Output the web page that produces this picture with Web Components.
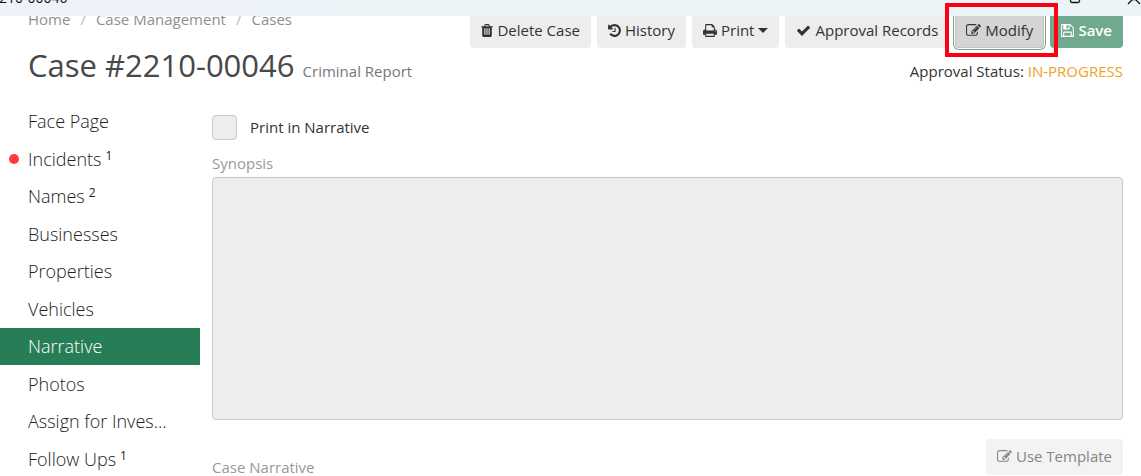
<!DOCTYPE html>
<html lang="en">
<head>
<meta charset="utf-8">
<meta name="viewport" content="width=device-width, initial-scale=1">
<title>Case #2210-00046</title>
<style>
  :root {
    --text: #333;
    --muted: #999;
    --green: #267d56;
    --green-soft: #71a98e;
    --control: #ededed;
    --border: #c8c8c8;
    --warn: #f0a31c;
    --gutter: 28px;
    --edge: 18px;
  }
  body {
    margin: 0;
    background: #fff;
    color: var(--text);
    font: 15px/1.5 "Open Sans", "Noto Sans", sans-serif;
  }
</style>
</head>
<body>
<case-app></case-app>

<script>
// Icon outlines: [x offset, width, path], all on a 1792 unit em.
const ICONS = {
  trash: [192, 1408, "M704 1376v-704q0-14-9-23t-23-9h-64q-14 0-23 9t-9 23v704q0 14 9 23t23 9h64q14 0 23-9t9-23zm256 0v-704q0-14-9-23t-23-9h-64q-14 0-23 9t-9 23v704q0 14 9 23t23 9h64q14 0 23-9t9-23zm256 0v-704q0-14-9-23t-23-9h-64q-14 0-23 9t-9 23v704q0 14 9 23t23 9h64q14 0 23-9t9-23zm-544-992h448l-48-117q-7-9-17-11h-317q-10 2-17 11zm928 32v64q0 14-9 23t-23 9h-96v948q0 83-47 143.5t-113 60.5h-832q-66 0-113-58.5t-47-141.5v-952h-96q-14 0-23-9t-9-23v-64q0-14 9-23t23-9h309l70-167q15-37 54-63t79-26h320q40 0 79 26t54 63l70 167h309q14 0 23 9t9 23z"],
  history: [128, 1536, "M1664 896q0 156-61 298t-164 245-245 164-298 61q-172 0-327-72.5t-264-204.5q-7-10-6.5-22.5t8.5-20.5l137-138q10-9 25-9 16 2 23 12 73 95 179 147t225 52q104 0 198.5-40.5t163.5-109.5 109.5-163.5 40.5-198.5-40.5-198.5-109.5-163.5-163.5-109.5-198.5-40.5q-98 0-188 35.5t-160 101.5l137 138q31 30 14 69-17 40-59 40h-448q-26 0-45-19t-19-45v-448q0-42 40-59 39-17 69 14l130 129q107-101 244.5-156.5t284.5-55.5q156 0 298 61t245 164 164 245 61 298zm-640-288v448q0 14-9 23t-23 9h-320q-14 0-23-9t-9-23v-64q0-14 9-23t23-9h224v-352q0-14 9-23t23-9h64q14 0 23 9t9 23z"],
  print: [64, 1664, "M448 1536h896v-256h-896v256zm0-640h896v-384h-160q-40 0-68-28t-28-68v-160h-640v640zm1152 64q0-26-19-45t-45-19-45 19-19 45 19 45 45 19 45-19 19-45zm128 0v416q0 13-9.500 22.500t-22.500 9.500h-224v160q0 40-28 68t-68 28h-960q-40 0-68-28t-28-68v-160h-224q-13 0-22.500-9.500t-9.500-22.500v-416q0-79 56.500-135.500t135.500-56.500h64v-544q0-40 28-68t68-28h672q40 0 88 20t76 48l152 152q28 28 48 76t20 88v256h64q79 0 135.500 56.500t56.500 135.500z"],
  check: [0, 1792, "M1671 566q0 40-28 68l-724 724-136 136q-28 28-68 28t-68-28l-136-136-362-362q-28-28-28-68t28-68l136-136q28-28 68-28t68 28l294 295 656-657q28-28 68-28t68 28l136 136q28 28 28 68z"],
  edit: [0, 1792, "M888 1184l116-116-152-152-116 116v56h96v96h56zm440-720q-16-16-33 1l-350 350q-17 17-1 33t33-1l350-350q17-17 1-33zm80 594v190q0 119-84.500 203.500t-203.500 84.500h-832q-119 0-203.500-84.500t-84.500-203.500v-832q0-119 84.500-203.500t203.500-84.500h832q63 0 117 25 15 7 18 23 3 17-9 29l-49 49q-14 14-32 8-23-6-45-6h-832q-66 0-113 47t-47 113v832q0 66 47 113t113 47h832q66 0 113-47t47-113v-126q0-13 9-22l64-64q15-15 35-7t20 29zm-96-738l288 288-672 672h-288v-288zm444 132l-92 92-288-288 92-92q28-28 68-28t68 28l152 152q28 28 28 68t-28 68z"],
  save: [128, 1536, "M512 1536h768v-384h-768v384zm896 0h128v-896q0-14-10-38.500t-20-34.500l-281-281q-10-10-34-20t-39-10v416q0 40-28 68t-68 28h-576q-40 0-68-28t-28-68v-416h-128v1280h128v-416q0-40 28-68t68-28h832q40 0 68 28t28 68v416zm-384-928v-320q0-13-9.500-22.500t-22.500-9.500h-192q-13 0-22.500 9.500t-9.500 22.500v320q0 13 9.500 22.500t22.500 9.500h192q13 0 22.500-9.500t9.500-22.500zm640 32v928q0 40-28 68t-68 28h-1344q-40 0-68-28t-28-68v-1344q0-40 28-68t68-28h928q40 0 88 20t76 48l280 280q28 28 48 76t20 88z"],
};

// Small helper: registers an element whose shadow root is a fixed template.
function define(name, html, setup) {
  const template = document.createElement("template");
  template.innerHTML = html;
  customElements.define(name, class extends HTMLElement {
    constructor() {
      super();
      this.attachShadow({ mode: "open" }).appendChild(template.content.cloneNode(true));
    }
    connectedCallback() {
      if (setup) setup(this, this.shadowRoot);
    }
  });
}

// ---------- Window title strip ----------
define("window-bar", `
  <style>
    :host {
      position: relative;
      z-index: 1;
      display: flex;
      justify-content: space-between;
      height: 16px;
      overflow: hidden;
      color: #111;
      background: linear-gradient(90deg, #eef2fb 20%, #ebf4f7 32%);
    }
    .title { margin: -12px 0 0 -9px; font-size: 14px; line-height: 20px; }
    .controls { display: flex; gap: 46px; }
    button {
      display: flex;
      align-items: flex-start;
      padding: 0;
      border: 0;
      background: none;
      color: inherit;
    }
    svg { display: block; }
  </style>
  <span class="title"><slot></slot></span>
  <div class="controls">
    <button type="button" aria-label="Maximize">
      <svg width="12" height="4" viewBox="0 0 12 4"><path d="M1.500 0v1q0 1.500 1.500 1.500h6q1.500 0 1.500-1.500v-1" fill="none" stroke="currentColor" stroke-width="1.300"/></svg>
    </button>
    <button type="button" aria-label="Close">
      <svg width="14" height="5" viewBox="0 0 14 5"><path d="M1 4l4.500-4.500h3L13 4" fill="none" stroke="currentColor" stroke-width="1.300"/></svg>
    </button>
  </div>
`);

// ---------- Toolbar button ----------
define("action-button", `
  <style>
    :host { display: block; }
    button {
      display: flex;
      align-items: center;
      gap: 4px;
      height: 36px;
      padding: 0 11px;
      border: 0;
      border-radius: 4px;
      font: inherit;
      color: var(--text);
      background: var(--control);
      white-space: nowrap;
      cursor: pointer;
    }
    svg { display: block; height: 15px; fill: currentColor; }
    .caret {
      display: none;
      border: 5px solid transparent;
      border-top-color: currentColor;
      border-bottom: 0;
    }
    :host([menu]) .caret { display: block; }
    :host([active]) button {
      background: #d4d4d4;
      box-shadow: inset 0 0 0 1px #c4c4c4, 0 0 0 1px #fff, 0 0 0 2px var(--green-soft);
    }
    :host([primary]) button { background: var(--green-soft); color: #fff; font-weight: 600; }
    :host([muted]) button { background: #f3f3f3; color: #858585; }
  </style>
  <button type="button">
    <svg aria-hidden="true"><path/></svg>
    <span><slot></slot></span>
    <i class="caret"></i>
  </button>
`, (host, root) => {
  const [x, width, path] = ICONS[host.getAttribute("icon")];
  const svg = root.querySelector("svg");
  svg.setAttribute("viewBox", `${x} 0 ${width} 1792`);
  svg.setAttribute("width", Math.round(width * 15 / 1792));
  svg.firstElementChild.setAttribute("d", path);
  root.querySelector("button").disabled = host.hasAttribute("disabled");
  if (!host.hasAttribute("menu")) root.querySelector(".caret").remove();
});

// ---------- Red call-out frame round its content ----------
define("call-out", `
  <style>
    :host { display: block; position: relative; }
    .frame {
      position: absolute;
      inset: -9px -14px -9px -10px;
      z-index: 2;
      border: 4px solid #fe0010;
      pointer-events: none;
    }
  </style>
  <slot></slot>
  <div class="frame"></div>
`);

// ---------- Breadcrumbs, actions, case title ----------
define("case-header", `
  <style>
    :host { display: block; margin-top: -4px; padding: 0 var(--edge) 0 var(--gutter); }
    .row { display: flex; justify-content: space-between; align-items: flex-start; }
    nav { display: flex; gap: 10px; margin-top: -4px; color: #bbb; }
    nav a { color: #8f8f8f; text-decoration: none; }
    .actions { display: flex; gap: 6px; }
    .heading { align-items: baseline; }
    h1 {
      margin: 0;
      font-size: 31px;
      line-height: 35px;
      font-weight: 400;
      color: #484848;
    }
    small { font-size: 15px; color: #777; }
    .status { margin: 0; }
    .status b { font-weight: 400; color: var(--warn); }
  </style>
  <div class="row">
    <nav aria-label="Breadcrumb">
      <a href="#home">Home</a><span>/</span>
      <a href="#management">Case Management</a><span>/</span>
      <a href="#cases">Cases</a>
    </nav>
    <div class="actions">
      <action-button icon="trash">Delete Case</action-button>
      <action-button icon="history">History</action-button>
      <action-button icon="print" menu>Print</action-button>
      <action-button icon="check">Approval Records</action-button>
      <call-out><action-button icon="edit" active>Modify</action-button></call-out>
      <action-button icon="save" primary disabled>Save</action-button>
    </div>
  </div>
  <div class="row heading">
    <h1>Case #2210-00046 <small>Criminal Report</small></h1>
    <p class="status">Approval Status: <b>IN-PROGRESS</b></p>
  </div>
`);

// ---------- Section list ----------
define("nav-item", `
  <style>
    :host { display: block; min-width: 0; }
    a {
      display: flex;
      align-items: center;
      padding: 6px var(--gutter) 6px 9px;
      font-size: 18px;
      font-weight: 350;
      line-height: 25px;
      color: #222;
      text-decoration: none;
      white-space: nowrap;
    }
    .dot { width: 10px; height: 10px; margin-right: 9px; border-radius: 50%; flex: none; }
    :host([alert]) .dot { background: #ff3b3b; }
    .label { overflow: hidden; text-overflow: ellipsis; }
    sup { align-self: flex-start; margin-left: 4px; font-size: 12px; font-weight: 400; line-height: 18px; }
    :host([current]) a { background: var(--green); color: #fff; }
  </style>
  <a href="#section"><i class="dot"></i><span class="label"><slot></slot></span></a>
`, (host, root) => {
  const link = root.querySelector("a");
  if (host.hasAttribute("count")) {
    const sup = document.createElement("sup");
    sup.textContent = host.getAttribute("count");
    link.append(sup);
  }
  if (host.hasAttribute("current")) link.setAttribute("aria-current", "page");
});

define("side-nav", `
  <style>
    :host { display: block; min-width: 0; }
    nav {
      display: grid;
      grid-template-columns: minmax(0, 1fr);
      grid-auto-rows: 1fr;
      height: 100%;
    }
  </style>
  <nav aria-label="Case sections"><slot></slot></nav>
`);

// ---------- Narrative form ----------
define("narrative-form", `
  <style>
    :host { display: block; }
    form { display: flex; flex-direction: column; padding-bottom: 4px; }
    .check { display: flex; align-items: center; gap: 13px; margin: 12px 0; }
    input {
      appearance: none;
      width: 25px;
      height: 25px;
      margin: 0;
      border: 1px solid var(--border);
      border-radius: 4px;
      background: var(--control);
    }
    .caption { color: var(--muted); }
    textarea {
      display: block;
      box-sizing: border-box;
      width: 100%;
      margin-top: 2px;
      padding: 8px 12px;
      border: 1px solid var(--border);
      border-radius: 4px;
      background: var(--control);
      font: inherit;
      color: inherit;
      resize: none;
    }
    .next { display: flex; justify-content: space-between; align-items: flex-end; margin-top: 19px; }
    .next .caption { margin-bottom: -4px; }
  </style>
  <form>
    <div class="check">
      <input type="checkbox" id="print" disabled>
      <label for="print">Print in Narrative</label>
    </div>
    <label class="caption" for="synopsis">Synopsis</label>
    <textarea id="synopsis" rows="10" readonly></textarea>
    <div class="next">
      <span class="caption">Case Narrative</span>
      <action-button icon="edit" muted disabled>Use Template</action-button>
    </div>
  </form>
`);

// ---------- Page ----------
define("case-app", `
  <style>
    :host { display: block; height: 100vh; overflow: hidden; }
    .body {
      display: grid;
      grid-template-columns: 200px minmax(0, 1fr);
      gap: 12px;
      margin-top: 14px;
      padding-right: var(--edge);
    }
  </style>
  <window-bar>2210-00046</window-bar>
  <case-header></case-header>
  <div class="body">
    <side-nav>
      <nav-item>Face Page</nav-item>
      <nav-item alert count="1">Incidents</nav-item>
      <nav-item count="2">Names</nav-item>
      <nav-item>Businesses</nav-item>
      <nav-item>Properties</nav-item>
      <nav-item>Vehicles</nav-item>
      <nav-item current>Narrative</nav-item>
      <nav-item>Photos</nav-item>
      <nav-item>Assign for Investigation</nav-item>
      <nav-item count="1">Follow Ups</nav-item>
    </side-nav>
    <narrative-form></narrative-form>
  </div>
`);
</script>
</body>
</html>
